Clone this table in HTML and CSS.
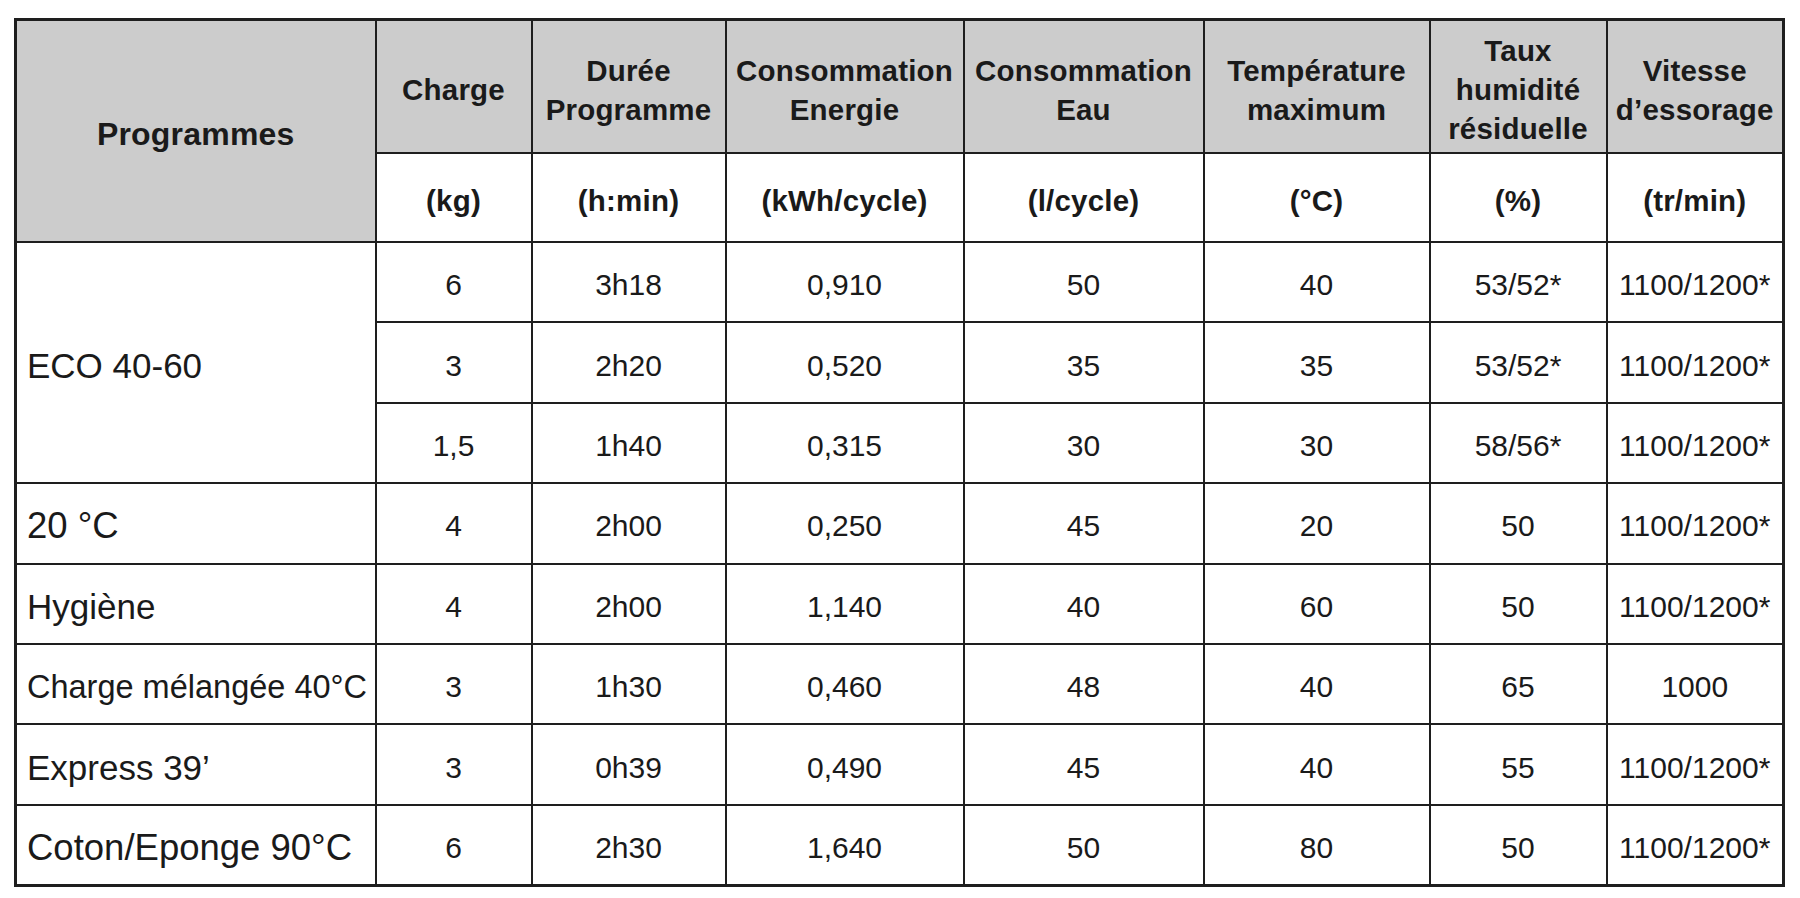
FILE: index.html
```html
<!DOCTYPE html>
<html lang="fr">
<head>
<meta charset="utf-8">
<title>Programmes</title>
<link rel="stylesheet" href="styles.css">
</head>
<body>
<table class="specs">
  <colgroup>
    <col class="c-prog">
    <col class="c-charge">
    <col class="c-duree">
    <col class="c-energie">
    <col class="c-eau">
    <col class="c-temp">
    <col class="c-taux">
    <col class="c-vitesse">
  </colgroup>
  <thead>
    <tr class="h-titles">
      <th rowspan="2" class="h-prog">Programmes</th>
      <th>Charge</th>
      <th>Durée<br>Programme</th>
      <th>Consommation<br>Energie</th>
      <th>Consommation<br>Eau</th>
      <th>Température<br>maximum</th>
      <th>Taux<br>humidité<br>résiduelle</th>
      <th>Vitesse<br>d’essorage</th>
    </tr>
    <tr class="h-units">
      <th>(kg)</th>
      <th>(h:min)</th>
      <th>(kWh/cycle)</th>
      <th>(l/cycle)</th>
      <th>(°C)</th>
      <th>(%)</th>
      <th>(tr/min)</th>
    </tr>
  </thead>
  <tbody>
    <tr>
      <td rowspan="3" class="prog">ECO 40-60</td>
      <td>6</td><td>3h18</td><td>0,910</td><td>50</td><td>40</td><td>53/52*</td><td>1100/1200*</td>
    </tr>
    <tr>
      <td>3</td><td>2h20</td><td>0,520</td><td>35</td><td>35</td><td>53/52*</td><td>1100/1200*</td>
    </tr>
    <tr>
      <td>1,5</td><td>1h40</td><td>0,315</td><td>30</td><td>30</td><td>58/56*</td><td>1100/1200*</td>
    </tr>
    <tr>
      <td class="prog prog-wide">20 °C</td>
      <td>4</td><td>2h00</td><td>0,250</td><td>45</td><td>20</td><td>50</td><td>1100/1200*</td>
    </tr>
    <tr>
      <td class="prog">Hygiène</td>
      <td>4</td><td>2h00</td><td>1,140</td><td>40</td><td>60</td><td>50</td><td>1100/1200*</td>
    </tr>
    <tr>
      <td class="prog prog-narrow">Charge mélangée 40°C</td>
      <td>3</td><td>1h30</td><td>0,460</td><td>48</td><td>40</td><td>65</td><td>1000</td>
    </tr>
    <tr>
      <td class="prog">Express 39’</td>
      <td>3</td><td>0h39</td><td>0,490</td><td>45</td><td>40</td><td>55</td><td>1100/1200*</td>
    </tr>
    <tr>
      <td class="prog prog-wide">Coton/Eponge 90°C</td>
      <td>6</td><td>2h30</td><td>1,640</td><td>50</td><td>80</td><td>50</td><td>1100/1200*</td>
    </tr>
  </tbody>
</table>
</body>
</html>
```

FILE: styles.css
```css
html, body {
  margin: 0;
  padding: 0;
  background: #ffffff;
}

body {
  padding: 18px 0 0 14px;
  font-family: "Liberation Sans", Arial, Helvetica, sans-serif;
  color: #1a1a1a;
}

.specs {
  border-collapse: collapse;
  table-layout: fixed;
  width: 1770px;
  border: 3px solid #1e1e1e;
}

.c-prog { width: 360px; }
.c-charge { width: 156px; }
.c-duree { width: 194px; }
.c-energie { width: 238px; }
.c-eau { width: 240px; }
.c-temp { width: 226px; }
.c-taux { width: 177px; }
.c-vitesse { width: 177px; }

.specs th,
.specs td {
  border: 2px solid #1e1e1e;
  padding: 6px 0 0 0;
  text-align: center;
  vertical-align: middle;
  white-space: nowrap;
}

.specs th {
  font-weight: bold;
  font-size: 29.5px;
  line-height: 39px;
  letter-spacing: 0.2px;
}

.h-titles th {
  background: #cccccc;
  height: 125px;
}

.h-titles th.h-prog {
  font-size: 32px;
}

.h-units th {
  background: #ffffff;
  height: 81px;
}

.specs td {
  font-size: 30px;
  height: 72.4px;
}

.specs td.prog {
  text-align: left;
  padding-left: 10px;
  font-size: 35px;
}

.specs td.prog-narrow {
  font-size: 32.5px;
}

.specs td.prog-wide {
  font-size: 36.5px;
}
```
